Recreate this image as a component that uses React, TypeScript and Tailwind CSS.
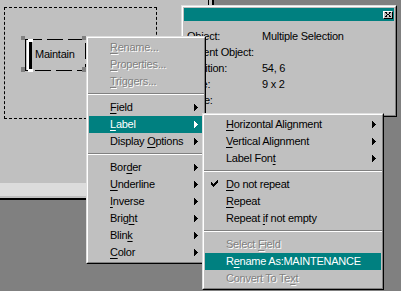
import React from "react";
import clsx from "clsx";

type Entry =
	| { kind: "sep" }
	| {
			kind: "item";
			label: React.ReactNode;
			disabled?: boolean;
			active?: boolean;
			sub?: boolean;
			checked?: boolean;
	  };

// mnemonic letter
function U({ children }: { children: React.ReactNode }) {
	return <span className="underline decoration-1 underline-offset-2">{children}</span>;
}

function Arrow() {
	return (
		<svg width="4" height="7" viewBox="0 0 4 7" className="ml-auto shrink-0" shapeRendering="crispEdges">
			<rect x="0" y="0" width="1" height="7" fill="currentColor" />
			<rect x="1" y="1" width="1" height="5" fill="currentColor" />
			<rect x="2" y="2" width="1" height="3" fill="currentColor" />
			<rect x="3" y="3" width="1" height="1" fill="currentColor" />
		</svg>
	);
}

function Check() {
	return (
		<svg width="7" height="7" viewBox="0 0 7 7" className="absolute left-[6px] top-[4px]" shapeRendering="crispEdges">
			<rect x="6" y="0" width="1" height="1" fill="currentColor" />
			<rect x="5" y="1" width="2" height="1" fill="currentColor" />
			<rect x="0" y="2" width="1" height="1" fill="currentColor" />
			<rect x="4" y="2" width="3" height="1" fill="currentColor" />
			<rect x="0" y="3" width="2" height="1" fill="currentColor" />
			<rect x="3" y="3" width="3" height="1" fill="currentColor" />
			<rect x="0" y="4" width="5" height="1" fill="currentColor" />
			<rect x="1" y="5" width="3" height="1" fill="currentColor" />
			<rect x="2" y="6" width="1" height="1" fill="currentColor" />
		</svg>
	);
}

function Menu({ items, className }: { items: Entry[]; className: string }) {
	return (
		<div className={clsx("absolute border border-t-[#dfdfdf] border-l-[#dfdfdf] border-b-black border-r-black", className)}>
			<div className="border border-t-white border-l-white border-b-[#808080] border-r-[#808080] bg-[#c0c0c0] p-px">
				{items.map((it, i) =>
					it.kind == "sep" ? (
						<div key={i} className="-mx-px h-[9px] pt-[3px]">
							<div className="h-px bg-[#808080]" />
							<div className="h-px bg-white" />
						</div>
					) : (
						<div
							key={i}
							className={clsx(
								"relative flex h-[17px] items-center whitespace-nowrap pl-[21px] pr-[5px]",
								it.active
									? "bg-[#008080] text-white"
									: it.disabled
									? "text-[#808080] [text-shadow:1px_1px_0_#fff]"
									: "text-black"
							)}
						>
							{it.checked && <Check />}
							<span>{it.label}</span>
							{it.sub && <Arrow />}
						</div>
					)
				)}
			</div>
		</div>
	);
}

const mainItems: Entry[] = [
	{ kind: "item", label: <><U>R</U>ename...</>, disabled: true },
	{ kind: "item", label: <><U>P</U>roperties...</>, disabled: true },
	{ kind: "item", label: <><U>T</U>riggers...</>, disabled: true },
	{ kind: "sep" },
	{ kind: "item", label: <><U>F</U>ield</>, sub: true },
	{ kind: "item", label: <><U>L</U>abel</>, sub: true, active: true },
	{ kind: "item", label: <>Display <U>O</U>ptions</>, sub: true },
	{ kind: "sep" },
	{ kind: "item", label: <>Bor<U>d</U>er</>, sub: true },
	{ kind: "item", label: <><U>U</U>nderline</>, sub: true },
	{ kind: "item", label: <><U>I</U>nverse</>, sub: true },
	{ kind: "item", label: <>Brig<U>h</U>t</>, sub: true },
	{ kind: "item", label: <>Blin<U>k</U></>, sub: true },
	{ kind: "item", label: <><U>C</U>olor</>, sub: true },
];

const labelItems: Entry[] = [
	{ kind: "item", label: <><U>H</U>orizontal Alignment</>, sub: true },
	{ kind: "item", label: <><U>V</U>ertical Alignment</>, sub: true },
	{ kind: "item", label: <>Label Fon<U>t</U></>, sub: true },
	{ kind: "sep" },
	{ kind: "item", label: <><U>D</U>o not repeat</>, checked: true },
	{ kind: "item", label: <><U>R</U>epeat</> },
	{ kind: "item", label: <>Repeat <U>i</U>f not empty</> },
	{ kind: "sep" },
	{ kind: "item", label: <>Select <U>F</U>ield</>, disabled: true },
	{ kind: "item", label: <>R<U>e</U>name As:MAINTENANCE</>, active: true },
	{ kind: "item", label: <>Convert To Te<U>x</U>t</>, disabled: true },
];

const props = [
	["Object:", "Multiple Selection"],
	["Parent Object:", ""],
	["Position:", "54, 6"],
	["Size:", "9 x 2"],
	["Type:", ""],
];

function SelectedLabel() {
	return (
		<>
			<svg width="90" height="80" className="pointer-events-none absolute left-0 top-0" shapeRendering="crispEdges">
				<rect x="25.5" y="39.5" width="60" height="31" fill="none" stroke="#000" strokeDasharray="16 5" />
				<rect x="25" y="39" width="1" height="32" fill="#000" />
				<rect x="21" y="36" width="4" height="4" fill="#808080" />
				<rect x="21" y="67" width="4" height="5" fill="#808080" />
				<rect x="82" y="36" width="4" height="4" fill="#808080" />
				<rect x="82" y="67" width="4" height="5" fill="#808080" />
				{/* text cursor */}
				<rect x="25" y="39" width="3" height="1" fill="#000" />
				<rect x="25" y="70" width="3" height="1" fill="#000" />
				<rect x="27" y="40" width="2" height="30" fill="#fff" />
				<rect x="28" y="39" width="5" height="3" fill="#fff" />
				<rect x="28" y="69" width="5" height="3" fill="#fff" />
				<rect x="29" y="42" width="3" height="27" fill="#000" />
			</svg>
			<div className="absolute left-[35px] top-[48px] leading-[13px]">Maintain</div>
		</>
	);
}

export default function App() {
	return (
		<div className="relative h-[291px] w-[401px] overflow-hidden bg-[#808080] font-['Liberation_Sans',Arial,sans-serif] text-[11px] tracking-[-0.25px] text-black">
			{/* form window */}
			<div className="absolute left-0 top-0 flex h-[200px] w-[214px] flex-col">
				<div className="flex flex-1">
					<div className="relative flex-1 bg-[#c0c0c0]">
						<div className="absolute left-[4px] top-[7px] h-[112px] w-[153px] border border-dashed border-black" />
						<SelectedLabel />
					</div>
					<div className="w-[6px] border-l border-r-2 border-black bg-[#c0c0c0]" />
				</div>
				<div className="h-[13px] bg-[#dcdcdc]" />
				<div className="h-[2px] bg-[#c0c0c0]" />
				<div className="h-[2px] bg-black" />
			</div>

			{/* properties window */}
			<div className="absolute left-[181px] top-[5px] h-[112px] w-[216px] border border-t-[#dfdfdf] border-l-[#dfdfdf] border-b-black border-r-black">
				<div className="flex h-full flex-col border border-t-white border-l-white border-b-[#808080] border-r-[#808080] bg-[#c0c0c0] p-px">
					<div className="flex h-[13px] items-center justify-end bg-[#008080] pr-px">
						<div className="flex h-[8px] w-[10px] items-center justify-center border border-t-white border-l-white border-b-black border-r-black bg-[#c0c0c0]">
							<svg width="6" height="5" viewBox="0 0 6 5" shapeRendering="crispEdges">
								<path d="M0 0h2v1H0zM4 0h2v1H4zM1 1h1v1H1zM4 1h1v1H4zM2 2h2v1H2zM1 3h1v1H1zM4 3h1v1H4zM0 4h2v1H0zM4 4h2v1H4z" fill="#000" />
							</svg>
						</div>
					</div>
					<div className="pl-[3px] pt-[7px]">
						{props.map(([k, v]) => (
							<div key={k} className="flex h-4 items-center leading-4">
								<span className="w-[75px] shrink-0">{k}</span>
								<span>{v}</span>
							</div>
						))}
					</div>
				</div>
			</div>

			<Menu items={mainItems} className="left-[86px] top-[36px] w-[120px]" />
			<Menu items={labelItems} className="left-[202px] top-[113px] w-[182px]" />
		</div>
	);
}
